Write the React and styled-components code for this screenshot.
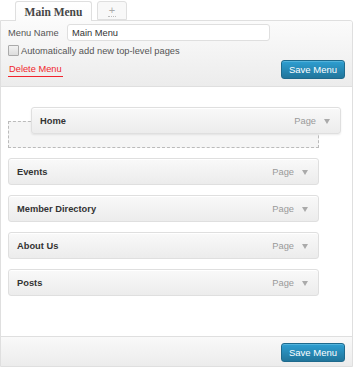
import React from "react";
import styled, { createGlobalStyle } from "styled-components";

const Global = createGlobalStyle`
  html, body { margin: 0; padding: 0; background: #fff; }
  body { font-family: "Liberation Sans", Arial, sans-serif; font-size: 9.3px; color: #333; }
  * { box-sizing: border-box; }
`;

const Wrap = styled.div`
  width: 353px;
  height: 367px;
  display: flex;
  flex-direction: column;
`;

const Tabs = styled.div`
  display: flex;
  gap: 5px;
  padding: 1px 0 0 15px;
  height: 21px;
  position: relative;
  z-index: 2;
`;

const Tab = styled.div`
  height: ${(p) => (p.$active ? "20px" : "19px")};
  width: ${(p) => p.$w}px;
  border: 1px solid #dfdfdf;
  border-bottom: ${(p) => (p.$active ? "none" : "1px solid #dfdfdf")};
  border-radius: 3px 3px 0 0;
  background: ${(p) => (p.$active ? "linear-gradient(#ffffff, #fbfbfb)" : "#f8f8f8")};
  display: flex;
  align-items: center;
  justify-content: center;
  font-family: "Liberation Serif", "Times New Roman", serif;
  font-weight: bold;
  font-size: 11.5px;
  color: #464646;
`;

const Abbr = styled.span`
  font-family: "Liberation Sans", Arial, sans-serif;
  font-weight: normal;
  font-size: 11px;
  color: #aaa;
  line-height: 9px;
  border-bottom: 1px dotted #bbb;
  padding: 0 1px 1px;
  margin-top: 2px;
`;

const Panel = styled.div`
  flex: 1;
  margin-top: -1px;
  border: 1px solid #dfdfdf;
  border-radius: 0 3px 0 0;
  display: flex;
  flex-direction: column;
`;

const Header = styled.div`
  background: linear-gradient(#fbfbfb, #ececec);
  border-bottom: 1px solid #dfdfdf;
  padding: 3px 7px 7px 7px;
  display: flex;
  flex-direction: column;
  border-radius: 0 3px 0 0;
`;

const Row = styled.div`
  display: flex;
  align-items: center;
`;

const Label = styled.span`
  color: #555;
  width: 59px;
`;

const Input = styled.div`
  width: 203px;
  height: 17px;
  border: 1px solid #dfdfdf;
  border-radius: 3px;
  background: #fff;
  padding-left: 4px;
  display: flex;
  align-items: center;
  color: #333;
`;

const CheckRow = styled(Row)`
  margin-top: 4px;
  color: #555;
  gap: 2px;
`;

const Check = styled.span`
  width: 11px;
  height: 11px;
  border: 1px solid #aaa;
  border-radius: 1px;
  background: linear-gradient(#f2f2f2, #ddd);
`;

const ActionRow = styled(Row)`
  justify-content: space-between;
  margin-top: 4px;
`;

const Delete = styled.span`
  color: #f0252d;
  border-bottom: 1px solid #f0252d;
  padding: 0 1px 2px 1px;
  margin-top: 4px;
  align-self: flex-start;
`;

const Button = styled.span`
  height: 19px;
  padding: 0 7px;
  display: inline-flex;
  align-items: center;
  border: 1px solid #1e6a8d;
  border-radius: 3px;
  background: linear-gradient(#2e9fd2, #21759b);
  color: #fff;
  font-size: 9.5px;
  box-shadow: inset 0 1px 0 rgba(120, 200, 230, 0.5);
`;

const Body = styled.div`
  flex: 1;
  background: #fff;
  position: relative;
  padding: 34px 0 0 7px;
  display: flex;
  flex-direction: column;
  gap: 10px;
`;

const Placeholder = styled.div`
  width: 311px;
  height: 27px;
  border: 1px dashed #bbb;
  background: #f5f5f5;
`;

const Item = styled.div`
  width: ${(p) => (p.$drag ? 310 : 311)}px;
  height: 27px;
  border: 1px solid #dfdfdf;
  border-radius: 3px;
  background: linear-gradient(#f9f9f9, #ececec);
  box-shadow: inset 0 1px 0 #fff;
  display: flex;
  align-items: center;
  padding: 0 10px 0 8px;
  font-weight: bold;
  color: #333;
  ${(p) =>
    p.$drag &&
    `position: absolute; left: 30px; top: 20px; box-shadow: inset 0 1px 0 #fff, 0 1px 2px rgba(0,0,0,0.08);`}
`;

const Title = styled.span`
  flex: 1;
`;

const Type = styled.span`
  font-weight: normal;
  color: #999;
  margin-right: 8px;
`;

const Arrow = styled.span`
  width: 0;
  height: 0;
  border-left: 3px solid transparent;
  border-right: 3px solid transparent;
  border-top: 5px solid #aaa;
  margin-top: 1px;
`;

const Footer = styled.div`
  height: 30px;
  border-top: 1px solid #dfdfdf;
  background: linear-gradient(#f9f9f9, #ececec);
  display: flex;
  justify-content: flex-end;
  align-items: flex-start;
  padding: 6px 7px 0 0;
`;

const items = ["Events", "Member Directory", "About Us", "Posts"];

function MenuItem({ title, drag }) {
  return (
    <Item $drag={drag}>
      <Title>{title}</Title>
      <Type>Page</Type>
      <Arrow />
    </Item>
  );
}

export default function App() {
  return (
    <Wrap>
      <Global />
      <Tabs>
        <Tab $active $w={77}>Main Menu</Tab>
        <Tab $w={30}>
          <Abbr>+</Abbr>
        </Tab>
      </Tabs>
      <Panel>
        <Header>
          <Row>
            <Label>Menu Name</Label>
            <Input>Main Menu</Input>
          </Row>
          <CheckRow>
            <Check />
            <span>Automatically add new top-level pages</span>
          </CheckRow>
          <ActionRow>
            <Delete>Delete Menu</Delete>
            <Button>Save Menu</Button>
          </ActionRow>
        </Header>
        <Body>
          <MenuItem title="Home" drag />
          <Placeholder />
          {items.map((t) => (
            <MenuItem key={t} title={t} />
          ))}
        </Body>
        <Footer>
          <Button>Save Menu</Button>
        </Footer>
      </Panel>
    </Wrap>
  );
}
